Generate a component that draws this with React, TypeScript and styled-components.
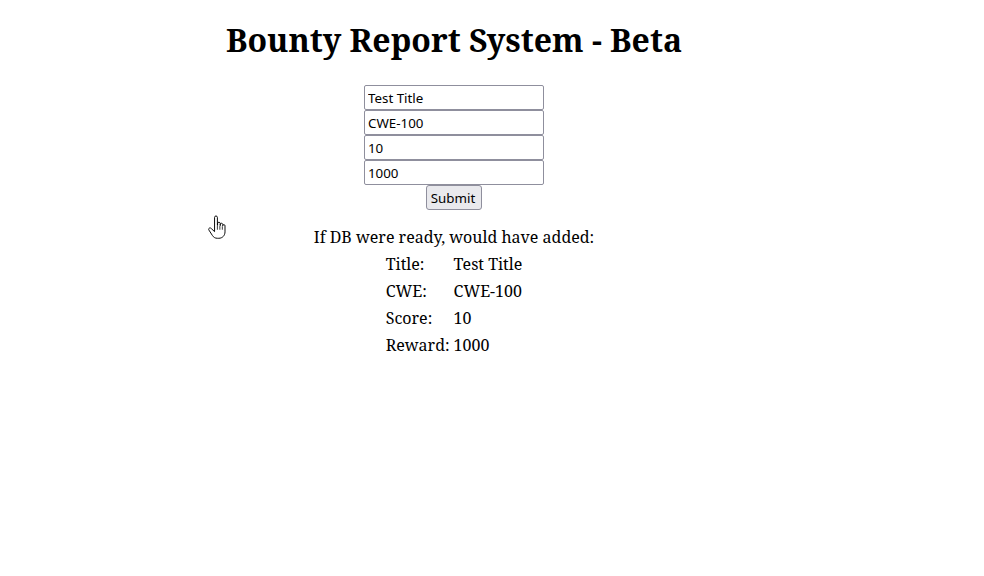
import React from "react";
import styled, { createGlobalStyle } from "styled-components";

const GlobalStyle = createGlobalStyle`
  html, body { margin: 0; padding: 0; background: #ffffff; }
  body { font-family: "Noto Serif", "DejaVu Serif", serif; color: #000; }
`;

const Page = styled.div`
  position: relative;
  width: 892px;
  margin-left: 8px;
  padding-top: 18px;
  text-align: center;
`;

const Title = styled.h1`
  margin: 0 0 23px 0;
  font-size: 32px;
  font-weight: 700;
  line-height: 44px;
`;

const Form = styled.form`
  display: flex;
  flex-direction: column;
  align-items: center;
`;

const Field = styled.input`
  box-sizing: border-box;
  width: 180px;
  height: 25px;
  margin: 0;
  padding: 1px 3px;
  border: 1px solid #8f8f9d;
  border-radius: 2px;
  font-family: "Noto Sans", "Open Sans", sans-serif;
  font-size: 13.33px;
  color: #000;
  background: #fff;
  outline: none;
`;

const SubmitButton = styled.button`
  box-sizing: border-box;
  width: 56px;
  height: 25px;
  margin: 0;
  padding: 0 2px 0 0;
  border: 1px solid #8f8f9d;
  border-radius: 3px;
  background: #e9e9ed;
  font-family: "Noto Sans", "Open Sans", sans-serif;
  font-size: 13.33px;
  color: #000;
  text-align: center;
`;

const Notice = styled.p`
  margin: 16px 0 2px 0;
  font-size: 16px;
  line-height: 22px;
`;

const Result = styled.table`
  margin: 0 auto;
  border-collapse: collapse;
  text-align: left;
  font-size: 16px;
`;

const Cell = styled.td`
  padding: 2px 2px;
  height: 23px;
  line-height: 22px;
  vertical-align: middle;
`;

const Cursor = styled.svg`
  position: absolute;
  left: 199px;
  top: 215px;
  width: 20px;
  height: 26px;
`;

const rows: [string, string][] = [
  ["Title:", "Test Title"],
  ["CWE:", "CWE-100"],
  ["Score:", "10"],
  ["Reward:", "1000"],
];

export default function App() {
  return (
    <>
      <GlobalStyle />
      <Page>
        <Title>Bounty Report System - Beta</Title>
        <Form onSubmit={(e) => e.preventDefault()}>
          <Field defaultValue="Test Title" />
          <Field defaultValue="CWE-100" />
          <Field defaultValue="10" />
          <Field defaultValue="1000" />
          <SubmitButton type="submit">Submit</SubmitButton>
        </Form>
        <Notice>If DB were ready, would have added:</Notice>
        <Result>
          <tbody>
            {rows.map(([k, v]) => (
              <tr key={k}>
                <Cell>{k}</Cell>
                <Cell>{v}</Cell>
              </tr>
            ))}
          </tbody>
        </Result>
        <Cursor viewBox="0 0 20 26">
          <path
            d="M9 2.5c0-.9.7-1.5 1.5-1.5s1.5.6 1.5 1.5V11h.2V9c0-.8.6-1.4 1.4-1.4s1.4.6 1.4 1.4v2.2V10c0-.8.6-1.3 1.3-1.3s1.3.5 1.3 1.3v1.3c0-.7.6-1.2 1.2-1.2s1.2.5 1.2 1.2v6.5c0 3.6-2.6 6.7-6.5 6.7h-1.5c-2.4 0-4-1-5.3-3l-3.6-5.6c-.5-.8-.3-1.7.4-2.1.7-.4 1.6-.2 2.1.5L9 17.5V2.5z"
            fill="#fff"
            stroke="#000"
            strokeWidth="1"
            strokeLinejoin="round"
            transform="translate(-1 0) scale(0.95)"
          />
          <path d="M12 11.5v4M14.6 11.5v4M17.2 11.8v3.7" stroke="#000" strokeWidth="0.8" transform="translate(-1 0) scale(0.95)" />
        </Cursor>
      </Page>
    </>
  );
}
